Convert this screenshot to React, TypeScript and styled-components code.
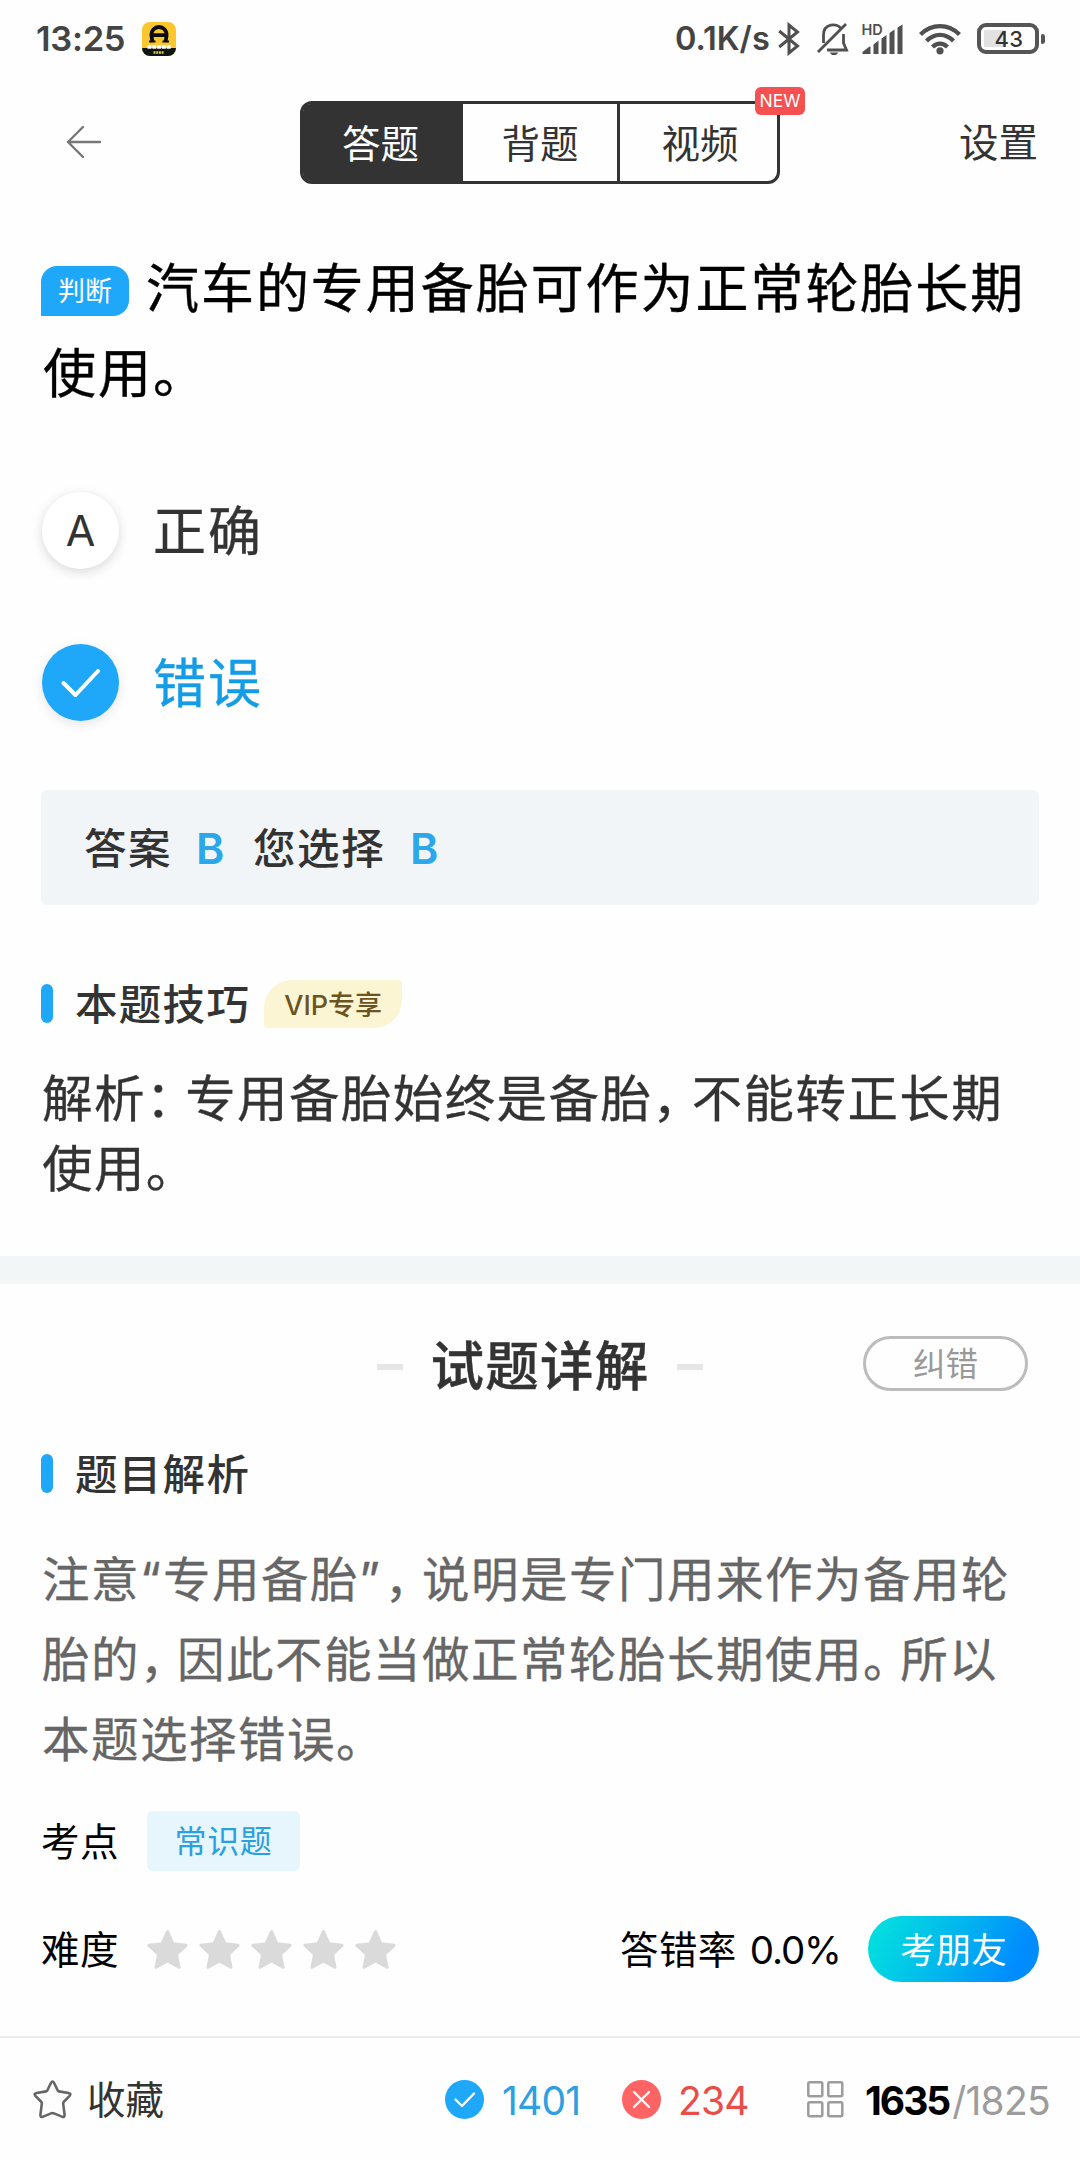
import React from 'react';
import styled, { createGlobalStyle } from 'styled-components';

const Global = createGlobalStyle`
  * { box-sizing: border-box; }
  body { margin: 0; background: #fefefe; }
`;

const Screen = styled.div`
  width: 1080px;
  height: 2160px;
  display: flex;
  flex-direction: column;
  overflow: hidden;
  background: #fefefe;
  color: #333;
  font-family: 'Inter', 'Noto Sans CJK SC', sans-serif;
  line-height: 1;
  white-space: nowrap;
`;

const StatusBar = styled.header`
  height: 77px;
  flex: none;
  display: flex;
  align-items: center;
  padding: 0 35px 0 36px;
  color: #444;
`;

const Clock = styled.span`
  width: 106px;
  padding-top: 1px;
  font-size: 34.5px;
  font-weight: 600;
  letter-spacing: -0.3px;
`;

const StatusIcons = styled.div`
  margin-left: auto;
  display: flex;
  align-items: center;
`;

const NetSpeed = styled.span`
  width: 103px;
  padding-top: 1px;
  font-size: 32.5px;
  font-weight: 600;
  letter-spacing: 0;
`;

const Glyph = styled.svg<{ $gap?: number }>`
  display: block;
  flex: none;
  margin-right: ${(p) => p.$gap ?? 0}px;
`;

const Battery = styled.div`
  width: 62px;
  height: 31px;
  border: 4px solid #555;
  border-radius: 9px;
  display: flex;
  align-items: center;
  justify-content: center;
  padding: 1px 0 0 2px;
  font-size: 22px;
  font-weight: 500;
  letter-spacing: 0.4px;
  color: #333;
  background: linear-gradient(#e2e2e2, #e2e2e2) 3px 3px / 22px 17px no-repeat;
`;

const BatteryTip = styled.span`
  width: 4px;
  height: 10px;
  margin-left: 2px;
  border-radius: 2px 3px 3px 2px;
  background: #555;
`;

const Header = styled.nav`
  height: 131px;
  flex: none;
  display: grid;
  grid-template-columns: 234px 480px 1fr;
  align-items: center;
  padding: 0 42px 0 66px;
`;

const BackIcon = styled.svg`
  display: block;
  margin-bottom: 2px;
`;

const Tabs = styled.div`
  position: relative;
  display: grid;
  grid-template-columns: 160px 157px 157px;
  height: 83px;
  border: 3px solid #333;
  border-radius: 12px;
`;

const Tab = styled.button<{ $active?: boolean; $last?: boolean }>`
  border: 0;
  border-right: ${(p) => (p.$last ? '0' : '3px solid #333')};
  padding: ${(p) => (p.$last ? '3px 0 0 3px' : p.$active ? '3px 2px 0 0' : '3px 0 0')};
  font: inherit;
  font-size: 38.5px;
  color: ${(p) => (p.$active ? '#fff' : '#333')};
  background: ${(p) => (p.$active ? '#333' : 'none')};
  border-radius: ${(p) => (p.$active ? '8px 0 0 8px' : '0')};
`;

const NewBadge = styled.span`
  position: absolute;
  top: -17px;
  right: -28px;
  width: 50px;
  height: 28px;
  border-radius: 6px;
  background: #f65051;
  color: #fff;
  font-size: 17.5px;
  line-height: 28px;
  text-align: center;
`;

const SettingsLink = styled.span`
  justify-self: end;
  padding-top: 3px;
  font-size: 39.5px;
`;

const Question = styled.section`
  height: 256px;
  flex: none;
  padding: 39px 41px 0;
  color: #000;
  font-size: 53px;
  line-height: 85px;
  letter-spacing: 1.95px;
  -webkit-text-stroke: 0.4px;
`;

const Line = styled.div<{ $indent?: number }>`
  display: flex;
  align-items: center;
  padding-left: ${(p) => p.$indent ?? 0}px;
`;

const TypeBadge = styled.span`
  width: 88px;
  height: 50px;
  margin: 2px 17px 0 0;
  border-radius: 16px 16px 16px 0;
  background: #1fa8fa;
  color: #fff;
  font-size: 27px;
  line-height: 52px;
  letter-spacing: 0;
  text-align: center;
  -webkit-text-stroke: 0;
`;

const Options = styled.section`
  height: 326px;
  flex: none;
  display: flex;
  flex-direction: column;
  gap: 74px;
  padding: 27px 42px 0;
`;

const Option = styled.div<{ $chosen?: boolean }>`
  display: flex;
  align-items: center;
  gap: 34px;
  height: 78px;
  font-size: 53px;
  letter-spacing: 1.9px;
  color: ${(p) => (p.$chosen ? '#149ce6' : '#333')};
  -webkit-text-stroke: 0.4px;
`;

const OptionText = styled.span`
  padding-top: 4px;
`;

const Marker = styled.span<{ $chosen?: boolean }>`
  width: 77px;
  height: 77px;
  border-radius: 50%;
  display: flex;
  align-items: center;
  justify-content: center;
  padding-top: 1px;
  font-size: 43px;
  letter-spacing: 0;
  color: #333;
  background: ${(p) => (p.$chosen ? '#1fa8fa' : '#fff')};
  box-shadow: 0 3px 12px ${(p) => (p.$chosen ? 'rgba(0,0,0,.10)' : 'rgba(0,0,0,.15)')};
  -webkit-text-stroke: 0;
`;

const AnswerBox = styled.section`
  height: 115px;
  flex: none;
  margin: 0 41px;
  padding: 2px 0 0 43px;
  display: flex;
  align-items: center;
  border-radius: 6px;
  background: #f1f5f8;
  font-size: 42.5px;
  font-weight: 500;
  letter-spacing: 1.6px;
`;

const AnswerLabel = styled.span<{ $w: number }>`
  width: ${(p) => p.$w}px;
  padding-top: 2px;
`;

const AnswerKey = styled.b`
  width: 57px;
  color: #2ba7ea;
  font-size: 43px;
  font-weight: 600;
`;

const SectionHead = styled.div<{ $top: number }>`
  display: flex;
  align-items: center;
  height: 48px;
  margin: ${(p) => p.$top}px 41px 0;
  padding-top: 2px;
  font-size: 42.5px;
  font-weight: 500;
  letter-spacing: 1.3px;
  flex: none;

  &::before {
    content: '';
    width: 12px;
    height: 39px;
    margin: 0 22px 4px 0;
    border-radius: 6px;
    background: #1fa8fa;
  }
`;

const VipBadge = styled.span`
  width: 138px;
  height: 48px;
  margin: 0 0 2px 14px;
  border-radius: 28px 4px 28px 4px;
  background: #fcf5d4;
  color: #6b5422;
  font-size: 27px;
  line-height: 51px;
  letter-spacing: 0;
  text-align: center;
`;

const Tip = styled.p`
  margin: 36px 42px 0;
  height: 192px;
  flex: none;
  font-size: 50.5px;
  line-height: 70px;
  letter-spacing: 1.4px;
  -webkit-text-stroke: 0.3px;
`;

const Punct = styled.span`
  letter-spacing: -0.22em;
`;

const OpenQuote = styled.span`
  letter-spacing: 2px;
`;

const CloseQuote = styled.span`
  letter-spacing: 5px;
`;

const Row = styled.span`
  display: block;
`;

const Divider = styled.div`
  height: 28px;
  flex: none;
  background: #f2f6f7;
`;

const DetailHead = styled.div`
  height: 159px;
  flex: none;
  display: grid;
  grid-template-columns: 1fr auto 1fr;
  align-items: center;
  padding: 0 52px;
`;

const DetailTitle = styled.h2`
  grid-column: 2;
  margin: 6px 0 0;
  width: 326px;
  display: flex;
  align-items: center;
  justify-content: space-between;
  font-size: 53.5px;
  font-weight: 500;
  letter-spacing: 1.2px;
  -webkit-text-stroke: 0.4px;

  &::before,
  &::after {
    content: '';
    width: 26px;
    height: 6px;
    background: #e6e6e6;
  }
`;

const ReportButton = styled.button`
  justify-self: end;
  width: 165px;
  height: 55px;
  padding: 0;
  border: 3px solid #bcbcbc;
  border-radius: 28px;
  background: none;
  font: inherit;
  font-size: 32.5px;
  line-height: 51px;
  color: #999;
`;

const Explain = styled.p`
  margin: 42px 42px 0;
  height: 240px;
  flex: none;
  color: #666;
  font-size: 47.5px;
  line-height: 80px;
  letter-spacing: 1.5px;
  -webkit-text-stroke: 0.3px;
`;

const MetaRow = styled.div<{ $top: number; $h: number }>`
  display: flex;
  align-items: center;
  height: ${(p) => p.$h}px;
  margin: ${(p) => p.$top}px 41px 0;
  flex: none;
  color: #000;
  font-size: 38.5px;
  letter-spacing: 0.4px;
`;

const MetaLabel = styled.span`
  width: 106px;
  padding-top: 3px;
`;

const TopicTag = styled.span`
  width: 153px;
  height: 60px;
  border-radius: 6px;
  background: #e7f5fd;
  color: #2ba0e0;
  font-size: 32px;
  line-height: 62px;
  letter-spacing: 0.6px;
  text-align: center;
`;

const Stars = styled.div`
  display: flex;
  gap: 11px;
`;

const ErrorRate = styled.span`
  width: 248px;
  margin-left: auto;
  padding-top: 2px;
  display: flex;
`;

const RateValue = styled.span`
  margin-left: 13px;
  letter-spacing: -1.1px;
`;

const ShareButton = styled.button`
  width: 171px;
  height: 66px;
  padding: 0;
  border: 0;
  border-radius: 33px;
  background: linear-gradient(115deg, #02dde0 8%, #02b4ee 50%, #008cff 85%);
  color: #fff;
  font: inherit;
  font-size: 35.5px;
  line-height: 70px;
`;

const Footer = styled.footer`
  margin-top: auto;
  height: 124px;
  flex: none;
  display: flex;
  align-items: center;
  padding: 1px 0 0 33px;
  border-top: 2px solid #ebebeb;
  font-size: 39px;
`;

const FooterItem = styled.div<{ $w: number; $gap: number; $color: string }>`
  display: flex;
  align-items: center;
  gap: ${(p) => p.$gap}px;
  width: ${(p) => p.$w}px;
  color: ${(p) => p.$color};
  flex: none;
`;

const FooterLabel = styled.span`
  font-size: 38.5px;
  padding-top: 2px;
`;

const Count = styled.span`
  padding-top: 1px;
  letter-spacing: -0.8px;
`;

const Current = styled.b`
  color: #000;
  font-weight: 700;
  letter-spacing: -2px;
  margin-right: 3px;
`;

const FilledStar = () => (
  <Glyph width="41" height="41" viewBox="1.6 1.6 20.8 20">
    <path
      d="M12 2.6L14.8 8.7L21.4 9.5L16.5 14L17.8 20.6L12 17.4L6.2 20.6L7.5 14L2.6 9.5L9.2 8.7Z"
      fill="#dadada"
      stroke="#dadada"
      strokeWidth="1.6"
      strokeLinejoin="round"
    />
  </Glyph>
);

export default function App() {
  return (
    <>
      <Global />
      <Screen>
        <StatusBar>
          <Clock>13:25</Clock>
          <Glyph width="34" height="34" viewBox="0 0 34 34">
            <rect width="34" height="34" rx="8" fill="#fcc62f" />
            <path d="M0 26H34V26A8 8 0 0 1 26 34H8A8 8 0 0 1 0 26Z" fill="#101510" />
            <path d="M10.5 20L9.5 14C8.5 2 25.5 2 24.5 14L23.5 20M9 13.2H25" fill="none" stroke="#0c0c0c" strokeWidth="3.8" />
            <path d="M7 19.5H13.5M20.5 19.5H27" stroke="#0c0c0c" strokeWidth="2" />
            <path d="M5.5 25H29" stroke="#fff" strokeWidth="3.4" strokeDasharray="4 .8" />
            <path d="M11.5 30.5H22" stroke="#d8c94b" strokeWidth="2.4" strokeDasharray="2 .7" />
          </Glyph>
          <StatusIcons>
            <NetSpeed>0.1K/s</NetSpeed>
            <Glyph $gap={17} width="22" height="34" viewBox="0 0 22 34" fill="none" stroke="#505050" strokeWidth="3">
              <path d="M1.2 9L19.5 24L11 31V3L19.5 10L1.2 25" />
            </Glyph>
            <Glyph $gap={13} width="32" height="34" viewBox="0 0 32 34" fill="none" stroke="#505050" strokeWidth="2.8">
              <path d="M6.5 21V13C6.5 1.5 20 .5 24 6.5M26.5 12V21L29.5 28H10M1 30L29 2" />
              <path d="M12.5 30.5H21.5L19 33H15Z" fill="#505050" stroke="none" />
            </Glyph>
            <Glyph $gap={15} width="42" height="34" viewBox="0 0 42 34">
              <text x="-0.5" y="13" fontFamily="Inter, sans-serif" fontSize="14.5" fontWeight="600" fill="#505050">HD</text>
              <path d="M.5 32V30L7.5 24.5H8.5V32ZM11.5 32V22.5L16.5 18.5V32ZM19.5 32V16.5L24.5 13V32ZM27.5 32V11L32.5 7.5V32ZM35.5 32V5.5L40.5 2.5V32Z" fill="#505050" />
            </Glyph>
            <Glyph $gap={16} width="42" height="32" viewBox="0 0 42 32" fill="none" stroke="#505050" strokeWidth="4.3">
              <path d="M1.5 11.5C12.5 .2 29.5 .2 40.5 11.5M7.5 18C15.5 9.8 26.5 9.8 34.5 18M13.5 24C18 19.4 24 19.4 28.5 24" />
              <circle cx="21" cy="27.8" r="3.6" fill="#505050" stroke="none" />
            </Glyph>
            <Battery>43</Battery>
            <BatteryTip />
          </StatusIcons>
        </StatusBar>

        <Header>
          <BackIcon width="36" height="34" viewBox="0 0 36 34" fill="none" stroke="#777" strokeWidth="2.4" strokeLinecap="round" strokeLinejoin="round">
            <path d="M34 17H2M17 2L2 17L17 32" />
          </BackIcon>
          <Tabs>
            <Tab $active>答题</Tab>
            <Tab>背题</Tab>
            <Tab $last>视频</Tab>
            <NewBadge>NEW</NewBadge>
          </Tabs>
          <SettingsLink>设置</SettingsLink>
        </Header>

        <Question>
          <Line>
            <TypeBadge>判断</TypeBadge>
            汽车的专用备胎可作为正常轮胎长期
          </Line>
          <Line $indent={2}>使用。</Line>
        </Question>

        <Options>
          <Option>
            <Marker>A</Marker>
            <OptionText>正确</OptionText>
          </Option>
          <Option $chosen>
            <Marker $chosen>
              <Glyph width="40" height="30" viewBox="0 0 40 30" fill="none" stroke="#fff" strokeWidth="4" strokeLinecap="round" strokeLinejoin="round">
                <path d="M2.5 15L14.5 27L37 3" />
              </Glyph>
            </Marker>
            <OptionText>错误</OptionText>
          </Option>
        </Options>

        <AnswerBox>
          <AnswerLabel $w={112}>答案</AnswerLabel>
          <AnswerKey>B</AnswerKey>
          <AnswerLabel $w={157}>您选择</AnswerLabel>
          <AnswerKey>B</AnswerKey>
        </AnswerBox>

        <SectionHead $top={75}>
          本题技巧
          <VipBadge>VIP专享</VipBadge>
        </SectionHead>
        <Tip>
          <Row>解析<Punct>：</Punct>专用备胎始终是备胎<Punct>，</Punct>不能转正长期</Row>
          <Row>使用。</Row>
        </Tip>

        <Divider />

        <DetailHead>
          <DetailTitle>试题详解</DetailTitle>
          <ReportButton>纠错</ReportButton>
        </DetailHead>
        <SectionHead $top={7}>题目解析</SectionHead>
        <Explain>
          <Row>注意<OpenQuote>“</OpenQuote>专用备胎<CloseQuote>”</CloseQuote><Punct>，</Punct>说明是专门用来作为备用轮</Row>
          <Row>胎的<Punct>，</Punct>因此不能当做正常轮胎长期使用<Punct>。</Punct>所以</Row>
          <Row>本题选择错误。</Row>
        </Explain>

        <MetaRow $top={31} $h={60}>
          <MetaLabel>考点</MetaLabel>
          <TopicTag>常识题</TopicTag>
        </MetaRow>
        <MetaRow $top={45} $h={66}>
          <MetaLabel>难度</MetaLabel>
          <Stars>
            {[1, 2, 3, 4, 5].map((n) => (
              <FilledStar key={n} />
            ))}
          </Stars>
          <ErrorRate>
            答错率
            <RateValue>0.0%</RateValue>
          </ErrorRate>
          <ShareButton>考朋友</ShareButton>
        </MetaRow>

        <Footer>
          <FooterItem $w={412} $gap={15} $color="#333">
            <Glyph width="39" height="39" viewBox="0 0 39 39" fill="none" stroke="#666" strokeWidth="2.6" strokeLinejoin="round">
              <path d="M18 2.8Q19.5 .2 21 2.8L24.6 10.2Q25 11.2 26 11.4L35.5 13Q38.5 13.6 36.6 15.8L30.6 22Q30 22.8 30.2 23.8L31.6 34.8Q31.6 38 28.8 36.6L21 33.4Q19.5 32.8 18 33.4L10.2 36.6Q7.4 38 7.4 34.8L8.8 23.8Q9 22.8 8.4 22L2.4 15.8Q.5 13.6 3.5 13L13 11.4Q14 11.2 14.4 10.2Z" />
            </Glyph>
            <FooterLabel>收藏</FooterLabel>
          </FooterItem>
          <FooterItem $w={177} $gap={18} $color="#2ea0e2">
            <Glyph width="39" height="39" viewBox="0 0 39 39" fill="none" stroke="#fff" strokeWidth="2.4" strokeLinecap="round" strokeLinejoin="round">
              <circle cx="19.5" cy="19.5" r="19.5" fill="#1fa8fa" stroke="none" />
              <path d="M10.5 19.5L17 26L29 13.5" />
            </Glyph>
            <Count>1401</Count>
          </FooterItem>
          <FooterItem $w={185} $gap={17} $color="#ea4d48">
            <Glyph width="39" height="39" viewBox="0 0 39 39" fill="none" stroke="#fff" strokeWidth="2.4" strokeLinecap="round">
              <circle cx="19.5" cy="19.5" r="19.5" fill="#ff6465" stroke="none" />
              <path d="M12 12L27 27M27 12L12 27" />
            </Glyph>
            <Count>234</Count>
          </FooterItem>
          <FooterItem $w={260} $gap={21} $color="#9c9c9c">
            <Glyph width="37" height="37" viewBox="0 0 37 37" fill="none" stroke="#9c9c9c" strokeWidth="2.5">
              <rect x="1.3" y="1.3" width="14" height="14" rx="1.5" />
              <rect x="21.3" y="1.3" width="14" height="14" rx="1.5" />
              <rect x="1.3" y="21.3" width="14" height="14" rx="1.5" />
              <rect x="21.3" y="21.3" width="14" height="14" rx="1.5" />
            </Glyph>
            <Count>
              <Current>1635</Current>/1825
            </Count>
          </FooterItem>
        </Footer>
      </Screen>
    </>
  );
}
